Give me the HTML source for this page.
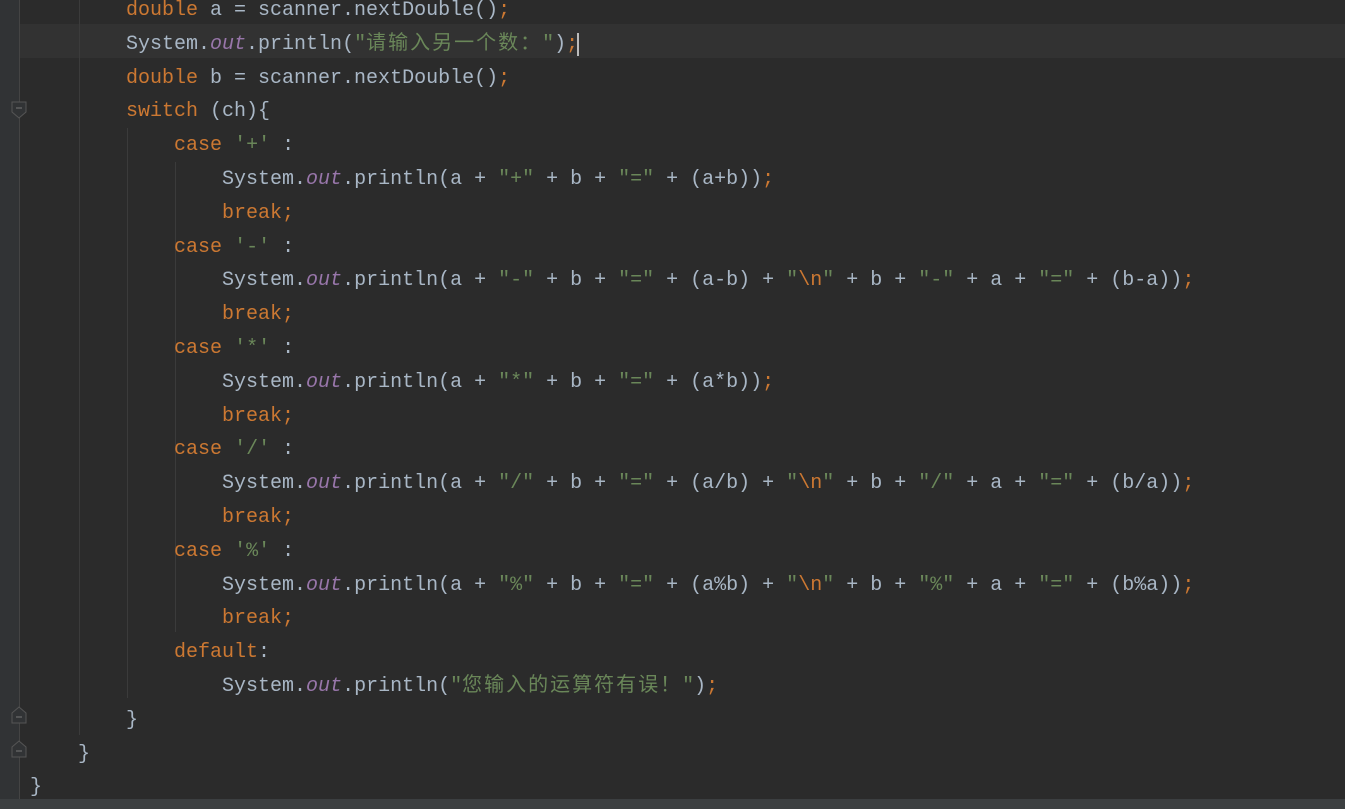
<!DOCTYPE html>
<html><head><meta charset="utf-8"><style>
body{margin:0;width:1345px;height:809px;background:#2b2b2b;overflow:hidden;position:relative;font-family:"Liberation Mono","Noto Sans CJK SC",monospace;font-size:20px;color:#a9b7c6}
.g{position:absolute;left:0;top:0;width:19px;height:799px;background:#313335;border-right:1px solid #444}
.bot{position:absolute;left:0;top:799px;width:1345px;height:10px;background:#3c3f41}
.cur{position:absolute;left:20px;top:24px;width:1325px;height:34px;background:#323232}
.code{position:absolute;left:30px;top:-6px;line-height:33.8px;white-space:pre}
.k{color:#cc7832}.s{color:#6a8759}.o{color:#9876aa;font-style:italic}
.c{letter-spacing:2px}
.ig{position:absolute;width:1px;background:#3b3b3b}
.fold{position:absolute;left:11px;width:16px;height:18px}
</style></head><body>
<div class="g"></div>
<div class="cur"></div>
<div class="ig" style="left:79px;top:0;height:735px"></div>
<div class="ig" style="left:127px;top:128px;height:570px"></div>
<div class="ig" style="left:175px;top:162px;height:470px"></div>
<svg class="fold" style="top:101px" viewBox="0 0 16 18"><path d="M1 1H15V11L8 17L1 11Z" fill="#313335" stroke="#555"/><path d="M5 7H11" stroke="#777"/></svg>
<svg class="fold" style="top:706px" viewBox="0 0 16 18"><path d="M1 17H15V7L8 1L1 7Z" fill="#313335" stroke="#555"/><path d="M5 11H11" stroke="#777"/></svg>
<svg class="fold" style="top:740px" viewBox="0 0 16 18"><path d="M1 17H15V7L8 1L1 7Z" fill="#313335" stroke="#555"/><path d="M5 11H11" stroke="#777"/></svg>
<div class="code">        <span class="k">double</span> a = scanner.nextDouble()<span class="k">;</span>
        System.<span class="o">out</span>.println(<span class="s">"<span class="c">请输入另一个数：</span>"</span>)<span class="k">;</span><span style="border-left:2px solid #bbb;margin-left:-1px"></span>
        <span class="k">double</span> b = scanner.nextDouble()<span class="k">;</span>
        <span class="k">switch</span> (ch){
            <span class="k">case</span> <span class="s">'+'</span> :
                System.<span class="o">out</span>.println(a + <span class="s">"+"</span> + b + <span class="s">"="</span> + (a+b))<span class="k">;</span>
                <span class="k">break;</span>
            <span class="k">case</span> <span class="s">'-'</span> :
                System.<span class="o">out</span>.println(a + <span class="s">"-"</span> + b + <span class="s">"="</span> + (a-b) + <span class="s">"<span class="k">\n</span>"</span> + b + <span class="s">"-"</span> + a + <span class="s">"="</span> + (b-a))<span class="k">;</span>
                <span class="k">break;</span>
            <span class="k">case</span> <span class="s">'*'</span> :
                System.<span class="o">out</span>.println(a + <span class="s">"*"</span> + b + <span class="s">"="</span> + (a*b))<span class="k">;</span>
                <span class="k">break;</span>
            <span class="k">case</span> <span class="s">'/'</span> :
                System.<span class="o">out</span>.println(a + <span class="s">"/"</span> + b + <span class="s">"="</span> + (a/b) + <span class="s">"<span class="k">\n</span>"</span> + b + <span class="s">"/"</span> + a + <span class="s">"="</span> + (b/a))<span class="k">;</span>
                <span class="k">break;</span>
            <span class="k">case</span> <span class="s">'%'</span> :
                System.<span class="o">out</span>.println(a + <span class="s">"%"</span> + b + <span class="s">"="</span> + (a%b) + <span class="s">"<span class="k">\n</span>"</span> + b + <span class="s">"%"</span> + a + <span class="s">"="</span> + (b%a))<span class="k">;</span>
                <span class="k">break;</span>
            <span class="k">default</span>:
                System.<span class="o">out</span>.println(<span class="s">"<span class="c">您输入的运算符有误！</span>"</span>)<span class="k">;</span>
        }
    }
}</div>
<div class="bot"></div>
</body></html>
